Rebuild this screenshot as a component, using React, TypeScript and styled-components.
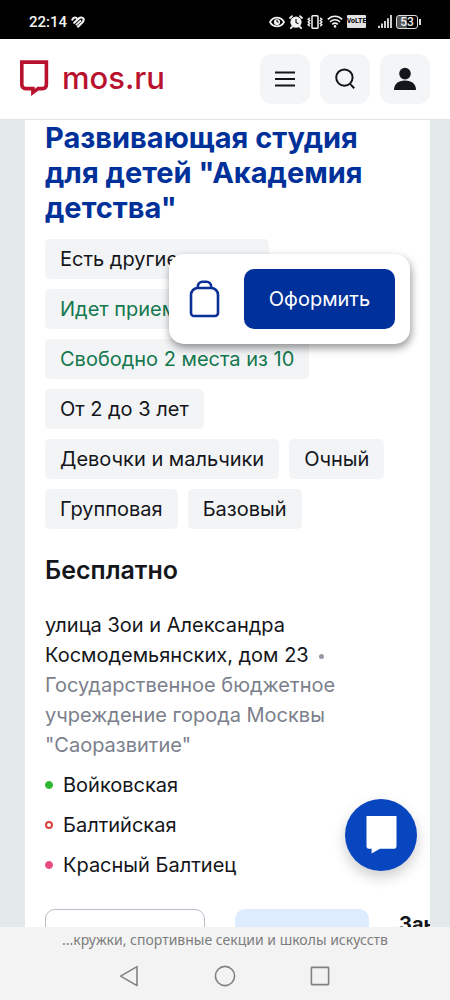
import React from "react";
import styled, { createGlobalStyle } from "styled-components";

const GlobalStyle = createGlobalStyle`
  *, *::before, *::after { box-sizing: border-box; }
  body {
    margin: 0;
    background: #e3e8eb;
    color: #14161b;
    font-family: Inter, "Liberation Sans", sans-serif;
    font-size: 20px;
    line-height: 30px;
  }
  h1, h2, p, ul { margin: 0; padding: 0; }
  button { border: 0; padding: 0; font: inherit; cursor: pointer; }
  a { color: inherit; text-decoration: none; }
  svg { display: block; flex: none; }
`;

const Screen = styled.div`
  display: flex;
  flex-direction: column;
  height: 100vh;
`;

const StatusBar = styled.div`
  flex: none;
  display: flex;
  align-items: center;
  justify-content: space-between;
  height: 39px;
  padding: 4px 29px 0;
  background: #000;
  color: #f2f2f2;
  font-family: Roboto, sans-serif;
  font-size: 15px;
  line-height: 20px;
  font-weight: 500;
`;

const StatusGroup = styled.div<{ $gap: number }>`
  display: flex;
  align-items: center;
  gap: ${(p) => p.$gap}px;
`;

const Header = styled.header`
  flex: none;
  display: flex;
  align-items: center;
  justify-content: space-between;
  height: 81px;
  padding: 0 20px;
  background: #fff;
  border-bottom: 1px solid #dfe4e7;
`;

const Brand = styled.a`
  display: flex;
  align-items: center;
  gap: 13px;
  padding-bottom: 2px;
  color: #b9122e;
  font-size: 31px;
  line-height: 40px;
  font-weight: 500;
`;

const HeaderActions = styled.nav`
  display: flex;
  gap: 10px;
`;

const IconButton = styled.button`
  display: grid;
  place-items: center;
  width: 50px;
  height: 50px;
  border-radius: 12px;
  background: #f4f5f7;
  color: #14161b;
`;

const Viewport = styled.main`
  position: relative;
  flex: 1;
  min-height: 0;
  overflow: hidden;
  padding: 0 20px 0 25px;
`;

const Card = styled.article`
  min-height: 100%;
  padding: 0 20px;
  background: #fff;
  overflow: hidden;
`;

const Title = styled.h1`
  color: #00309a;
  font-size: 29px;
  line-height: 35px;
  font-weight: 700;
`;

const Chips = styled.ul`
  display: flex;
  flex-wrap: wrap;
  gap: 10px;
  margin-top: 14px;
  list-style: none;
`;

const Chip = styled.li<{ $accent?: boolean }>`
  padding: 5px 15px;
  border-radius: 5px;
  background: #f3f4f6;
  color: ${(p) => (p.$accent ? "#14784f" : "#14161b")};
`;

const Price = styled.h2`
  margin-top: 26px;
  font-size: 25px;
  line-height: 30px;
  font-weight: 600;
`;

const Address = styled.p`
  margin-top: 25px;
`;

const Organisation = styled.span`
  color: #7b808c;
`;

const Separator = styled.span`
  display: inline-block;
  width: 5px;
  height: 5px;
  margin: 0 10px 3px;
  border-radius: 50%;
  background: #9598a3;
`;

const Stations = styled.ul`
  display: grid;
  gap: 10px;
  margin-top: 10px;
  list-style: none;
`;

const Station = styled.li<{ $color: string; $ring?: boolean }>`
  display: flex;
  align-items: center;
  gap: 10px;

  &::before {
    content: "";
    width: 8px;
    height: 8px;
    border-radius: 50%;
    border: ${(p) => (p.$ring ? 2 : 1)}px solid ${(p) => p.$color};
    background: ${(p) => (p.$ring ? "transparent" : p.$color)};
  }
`;

const CardActions = styled.div`
  display: flex;
  align-items: flex-start;
  gap: 30px;
  margin: 29px -20px 0 0;
  white-space: nowrap;
`;

const CardButton = styled.button<{ $filled?: boolean }>`
  flex: none;
  width: ${(p) => (p.$filled ? 134 : 160)}px;
  height: 60px;
  border-radius: 10px;
  border: ${(p) => (p.$filled ? "0" : "1px solid #b9bdc8")};
  background: ${(p) => (p.$filled ? "#ddecfe" : "#fff")};
`;

const Enrolment = styled.span`
  font-weight: 700;
`;

const OrderPanel = styled.aside`
  position: absolute;
  top: 134px;
  right: 40px;
  display: flex;
  align-items: center;
  gap: 24px;
  padding: 15px 15px 15px 20px;
  border-radius: 15px;
  background: #fff;
  box-shadow: 1px 4px 8px rgba(0, 0, 0, 0.42);
`;

const BagButton = styled.button`
  background: none;
  color: #0b3196;
`;

const OrderButton = styled.button`
  width: 151px;
  height: 60px;
  border-radius: 10px;
  background: #003099;
  color: #fff;
`;

const ChatButton = styled.button`
  position: absolute;
  right: 33px;
  bottom: 56px;
  display: grid;
  place-items: center;
  width: 72px;
  height: 72px;
  border-radius: 50%;
  background: #0846bf;
  color: #fff;
  box-shadow: 0 6px 14px rgba(0, 0, 0, 0.2);
`;

const SystemBar = styled.footer`
  flex: none;
  height: 73px;
  background: #f3f3f3;
  color: #7d7d7d;
`;

const Caption = styled.p`
  padding-top: 3px;
  text-align: center;
  font-family: "Noto Sans", "Open Sans", sans-serif;
  font-size: 14px;
  line-height: 20px;
`;

const SystemKeys = styled.div`
  display: flex;
  justify-content: center;
  gap: 71px;
  padding-top: 14px;
`;

const SystemKey = styled.button`
  background: none;
  color: #828282;
`;

const HealthIcon = () => (
  <svg width="14" height="12" viewBox="0 0 14 12" fill="none" stroke="currentColor" strokeWidth="2.2" strokeLinecap="round">
    <path d="M1.4 3.6C2 1.8 3.8 1 5.4 1.9M3.2 6.8 7.6 2.6C9.4 1 12 1.2 12.6 3 13 4.4 12 5.8 11 6.8L7 10.6" />
    <path d="M5.4 8.6 9.4 4.8" strokeWidth="1.8" />
  </svg>
);

const EyeIcon = () => (
  <svg width="16" height="12" viewBox="0 0 16 12" fill="none" stroke="currentColor" strokeWidth="1.7">
    <path d="M1 6C4 .2 12 .2 15 6 12 11.8 4 11.8 1 6Z" />
    <circle cx="8" cy="6" r="3.1" fill="currentColor" stroke="none" />
    <path d="M8 3.8V6h1.6" stroke="#000" strokeWidth="1" />
  </svg>
);

const AlarmIcon = () => (
  <svg width="14" height="14" viewBox="0 0 14 14" fill="none" stroke="currentColor" strokeLinecap="round">
    <circle cx="7" cy="7.2" r="5.6" fill="currentColor" stroke="none" />
    <path d="M1 3 3 1.2M13 3 11 1.2M3 12l-1.2 1.2M11 12l1.2 1.2" strokeWidth="1.8" />
    <path d="M7 4.2V7.4l2 1.2" stroke="#000" strokeWidth="1.1" />
  </svg>
);

const VibrateIcon = () => (
  <svg width="16" height="14" viewBox="0 0 16 14" fill="none" stroke="currentColor">
    <rect x="5" y="0.8" width="6" height="12.4" rx="0.8" strokeWidth="1.5" />
    <path d="M2.8 2.8 1.2 4.2 2.8 5.6 1.2 7 2.8 8.4 1.2 9.8 2.8 11.2M13.2 2.8 14.8 4.2 13.2 5.6 14.8 7 13.2 8.4 14.8 9.8 13.2 11.2" strokeWidth="1.4" />
  </svg>
);

const WifiIcon = () => (
  <svg width="16" height="13" viewBox="0 0 16 13" fill="none" stroke="currentColor" strokeWidth="1.6">
    <path d="M.8 4.4C5 .2 11 .2 15.2 4.4M3 7c3-3 7-3 10 0M5.2 9.4c1.8-1.6 3.8-1.6 5.6 0" />
    <circle cx="8" cy="11.4" r="1.3" fill="currentColor" stroke="none" />
  </svg>
);

const SignalIcon = () => (
  <svg width="14" height="13" viewBox="0 0 14 13" fill="none" stroke="currentColor" strokeWidth="1.7">
    <path d="M1 10.8V13M4 8.6V13M7 6V13M10 3.2V13M13 0V13" />
  </svg>
);

const VoLte = styled.span`
  display: flex;
  justify-content: center;
  width: 19px;
  height: 13px;
  border-radius: 1px;
  background: #e2e2e2;
  color: #000;
  font-family: "Liberation Sans Narrow", Roboto, sans-serif;
  font-size: 7px;
  line-height: 13px;
  font-weight: 700;
`;

const Battery = styled.span`
  position: relative;
  width: 22px;
  height: 14px;
  margin-right: 3px;
  border: 1px solid #ddd;
  border-radius: 3px;
  background: linear-gradient(90deg, #555 50%, #000 50%);
  font-size: 12px;
  line-height: 12px;
  text-align: center;

  &::after {
    content: "";
    position: absolute;
    top: 3px;
    right: -4px;
    width: 2px;
    height: 6px;
    background: #ddd;
  }
`;

const Spacer = styled.span`
  width: 4px;
`;

const LogoIcon = () => (
  <svg width="29" height="36" viewBox="0 0 29 36" fill="none" stroke="currentColor" strokeWidth="3.6">
    <path d="M1.8 2.1H26.4V24.6Q26.4 28.6 22.4 28.6H18.2L12.9 32.4V28.6H5.8Q1.8 28.6 1.8 24.6Z" />
  </svg>
);

const MenuIcon = () => (
  <svg width="20" height="16" viewBox="0 0 20 16" fill="none" stroke="currentColor" strokeWidth="1.8">
    <path d="M0 1.5H20M0 8H20M0 14.5H20" />
  </svg>
);

const SearchIcon = () => (
  <svg width="20" height="22" viewBox="0 0 20 22" fill="none" stroke="currentColor" strokeWidth="2">
    <circle cx="9.4" cy="9.6" r="8.2" />
    <path d="m14.6 15.4 4.6 4.8" />
  </svg>
);

const UserIcon = () => (
  <svg width="22" height="24" viewBox="0 0 22 24" fill="currentColor">
    <circle cx="11" cy="6.6" r="5.8" />
    <path d="M0 23C0 17.4 4 13.6 11 13.6S22 17.4 22 23Z" />
  </svg>
);

const BagIcon = () => (
  <svg width="31" height="38" viewBox="0 0 31 38" fill="none" stroke="currentColor" strokeWidth="2.6">
    <path d="M8.8 8h13.4a6.8 6.8 0 0 1 6.8 6.8V33a3 3 0 0 1-3 3H5a3 3 0 0 1-3-3V14.8a6.8 6.8 0 0 1 6.8-6.8Z" />
    <path d="M8.8 8V6.4A4.6 4.6 0 0 1 13.4 1.8h4.2a4.6 4.6 0 0 1 4.6 4.6V8" />
  </svg>
);

const ChatIcon = () => (
  <svg width="31" height="38" viewBox="0 0 31 38" fill="currentColor">
    <path d="M.5 0H30.5V30.4Q30.5 32.8 28.1 32.8H14L5.6 37.6V32.8H2.9Q.5 32.8 .5 30.4Z" />
  </svg>
);

const BackIcon = () => (
  <svg width="24" height="24" viewBox="0 0 24 24" fill="none" stroke="currentColor" strokeWidth="1.6" strokeLinejoin="round">
    <path d="M19 2.6V21.6L2.6 12.1Z" />
  </svg>
);

const HomeIcon = () => (
  <svg width="24" height="24" viewBox="0 0 24 24" fill="none" stroke="currentColor" strokeWidth="1.6">
    <circle cx="12" cy="12" r="9.6" />
  </svg>
);

const RecentIcon = () => (
  <svg width="24" height="24" viewBox="0 0 24 24" fill="none" stroke="currentColor" strokeWidth="1.6">
    <rect x="3.4" y="3.4" width="17.2" height="17.2" rx="0.5" />
  </svg>
);

const chips = [
  { text: "Есть другие группы" },
  { text: "Идет прием", accent: true },
  { text: "Свободно 2 места из 10", accent: true },
  { text: "От 2 до 3 лет" },
  { text: "Девочки и мальчики" },
  { text: "Очный" },
  { text: "Групповая" },
  { text: "Базовый" },
];

const stations = [
  { name: "Войковская", color: "#2db82d" },
  { name: "Балтийская", color: "#d8403c", ring: true },
  { name: "Красный Балтиец", color: "#ea4a82" },
];

export default function App() {
  return (
    <Screen>
      <GlobalStyle />
      <StatusBar>
        <StatusGroup $gap={4}>
          <span>22:14</span>
          <HealthIcon />
        </StatusGroup>
        <StatusGroup $gap={4}>
          <EyeIcon />
          <AlarmIcon />
          <VibrateIcon />
          <WifiIcon />
          <VoLte>VoLTE</VoLte>
          <Spacer />
          <SignalIcon />
          <Battery>53</Battery>
        </StatusGroup>
      </StatusBar>

      <Header>
        <Brand href="#">
          <LogoIcon />
          mos.ru
        </Brand>
        <HeaderActions>
          <IconButton aria-label="Меню"><MenuIcon /></IconButton>
          <IconButton aria-label="Поиск"><SearchIcon /></IconButton>
          <IconButton aria-label="Профиль"><UserIcon /></IconButton>
        </HeaderActions>
      </Header>

      <Viewport>
        <Card>
          <Title>
            <a href="#">Развивающая студия для детей "Академия детства"</a>
          </Title>
          <Chips>
            {chips.map((chip) => (
              <Chip key={chip.text} $accent={chip.accent}>{chip.text}</Chip>
            ))}
          </Chips>
          <Price>Бесплатно</Price>
          <Address>
            улица Зои и Александра Космодемьянских, дом 23
            <Separator />{" "}
            <Organisation>
              Государственное бюджетное учреждение города Москвы "Саоразвитие"
            </Organisation>
          </Address>
          <Stations>
            {stations.map((station) => (
              <Station key={station.name} $color={station.color} $ring={station.ring}>
                {station.name}
              </Station>
            ))}
          </Stations>
          <CardActions>
            <CardButton aria-label="Подробнее" />
            <CardButton $filled aria-label="Записаться" />
            <Enrolment>Занятия</Enrolment>
          </CardActions>
        </Card>

        <OrderPanel>
          <BagButton aria-label="Портфель"><BagIcon /></BagButton>
          <OrderButton>Оформить</OrderButton>
        </OrderPanel>
        <ChatButton aria-label="Чат"><ChatIcon /></ChatButton>
      </Viewport>

      <SystemBar>
        <Caption>...кружки, спортивные секции и школы искусств</Caption>
        <SystemKeys>
          <SystemKey aria-label="Назад"><BackIcon /></SystemKey>
          <SystemKey aria-label="Домой"><HomeIcon /></SystemKey>
          <SystemKey aria-label="Недавние"><RecentIcon /></SystemKey>
        </SystemKeys>
      </SystemBar>
    </Screen>
  );
}
